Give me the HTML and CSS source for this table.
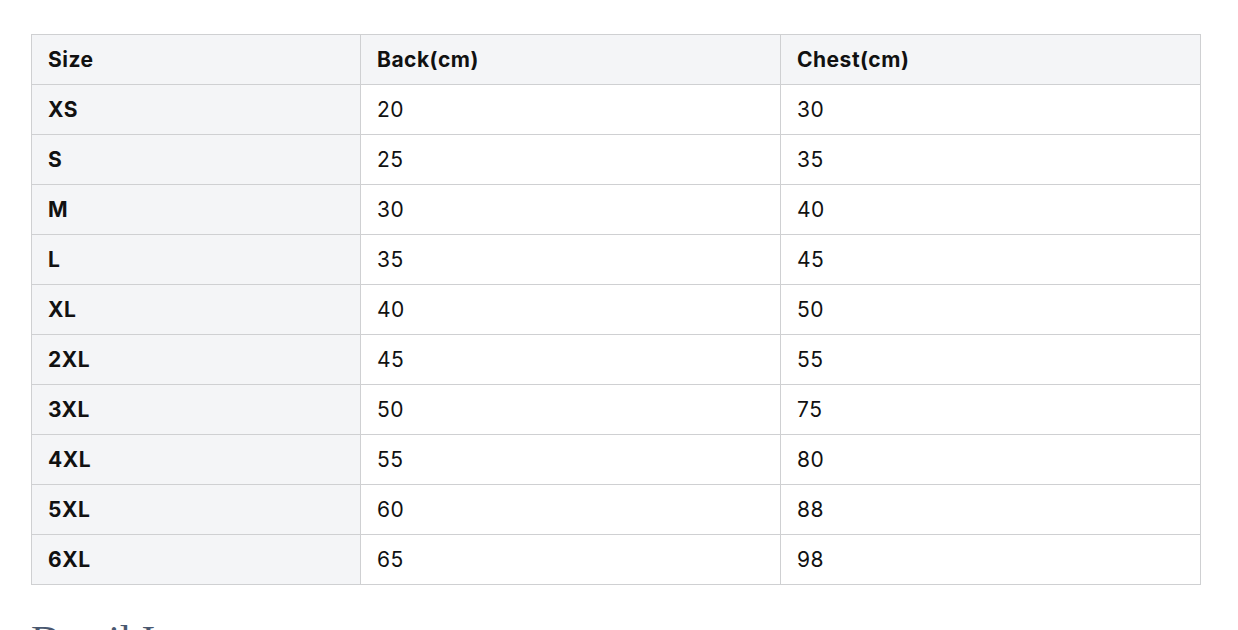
FILE: index.html
```html
<!DOCTYPE html>
<html>
<head>
<meta charset="utf-8">
<link rel="stylesheet" href="styles.css">
</head>
<body>
<div class="page">
  <table class="size-table">
    <thead>
      <tr><th class="c1">Size</th><th class="c2">Back(cm)</th><th class="c3">Chest(cm)</th></tr>
    </thead>
    <tbody>
      <tr><th>XS</th><td>20</td><td>30</td></tr>
      <tr><th>S</th><td>25</td><td>35</td></tr>
      <tr><th>M</th><td>30</td><td>40</td></tr>
      <tr><th>L</th><td>35</td><td>45</td></tr>
      <tr><th>XL</th><td>40</td><td>50</td></tr>
      <tr><th>2XL</th><td>45</td><td>55</td></tr>
      <tr><th>3XL</th><td>50</td><td>75</td></tr>
      <tr><th>4XL</th><td>55</td><td>80</td></tr>
      <tr><th>5XL</th><td>60</td><td>88</td></tr>
      <tr><th>6XL</th><td>65</td><td>98</td></tr>
    </tbody>
  </table>
  <h2 class="section-title">Detail Images</h2>
</div>
</body>
</html>
```
FILE: styles.css
```css
html, body {
  margin: 0;
  padding: 0;
  background: #ffffff;
}
.page {
  padding: 34px 0 0 31px;
}
.size-table {
  border-collapse: collapse;
  width: 1169px;
  table-layout: fixed;
  font-family: Inter, "Liberation Sans", sans-serif;
  font-size: 21px;
  letter-spacing: 0.5px;
  color: #111111;
}
.size-table th,
.size-table td {
  border: 1px solid #cfd0d2;
  height: 50px;
  padding: 0 16px;
  text-align: left;
  vertical-align: middle;
  box-sizing: border-box;
}
.size-table th {
  font-weight: 700;
  background: #f4f5f7;
}
.size-table td {
  font-weight: 400;
  background: #ffffff;
}
.c1 { width: 329px; }
.c2 { width: 420px; }
.c3 { width: 420px; }
.section-title {
  margin: 30px 0 0 0;
  font-family: "Liberation Serif", serif;
  font-weight: 400;
  font-size: 41px;
  color: #4a5870;
}
```
